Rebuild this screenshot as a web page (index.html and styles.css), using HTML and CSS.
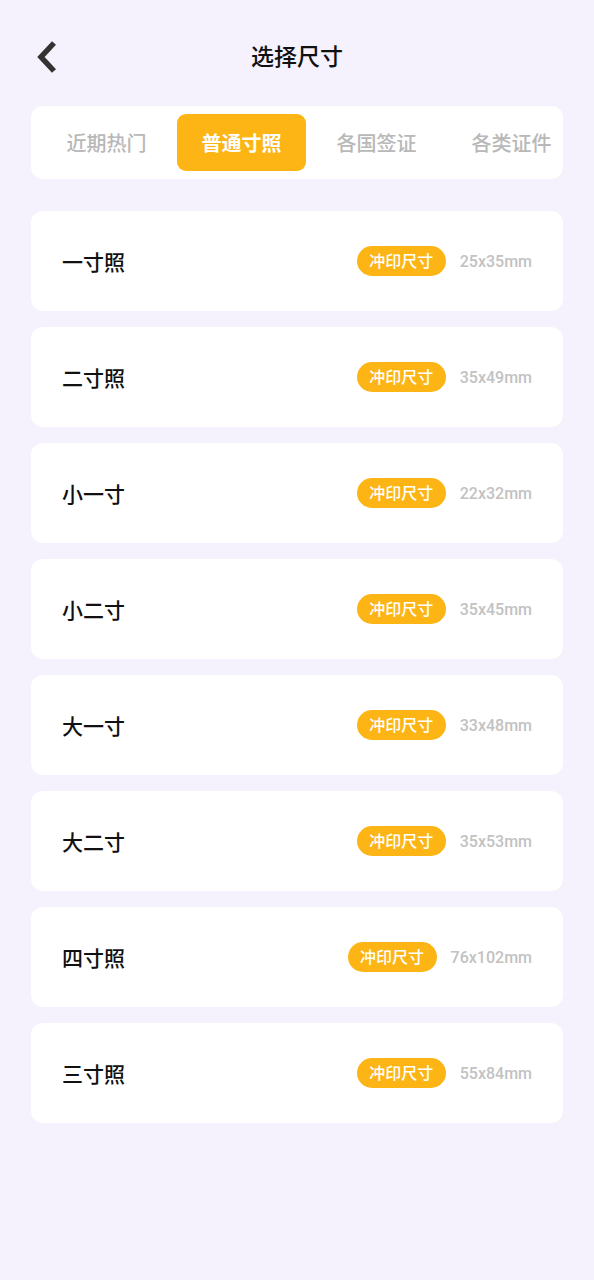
FILE: index.html
```html
<!DOCTYPE html>
<html lang="zh">
<head>
<meta charset="utf-8">
<title>选择尺寸</title>
<link rel="stylesheet" href="styles.css">
</head>
<body>
<div class="page">
  <header class="header">
    <svg class="back" width="24" height="34" viewBox="0 0 24 34"><path d="M18 3 L5 17 L18 31" fill="none" stroke="#333" stroke-width="5.5" stroke-linecap="butt" stroke-linejoin="miter"/></svg>
    <h1 class="title">选择尺寸</h1>
  </header>
  <nav class="tabs">
    <div class="tab">近期热门</div>
    <div class="tab active">普通寸照</div>
    <div class="tab">各国签证</div>
    <div class="tab">各类证件</div>
  </nav>
  <ul class="list">
    <li class="card"><span class="name">一寸照</span><span class="badge">冲印尺寸</span><span class="size">25x35mm</span></li>
    <li class="card"><span class="name">二寸照</span><span class="badge">冲印尺寸</span><span class="size">35x49mm</span></li>
    <li class="card"><span class="name">小一寸</span><span class="badge">冲印尺寸</span><span class="size">22x32mm</span></li>
    <li class="card"><span class="name">小二寸</span><span class="badge">冲印尺寸</span><span class="size">35x45mm</span></li>
    <li class="card"><span class="name">大一寸</span><span class="badge">冲印尺寸</span><span class="size">33x48mm</span></li>
    <li class="card"><span class="name">大二寸</span><span class="badge">冲印尺寸</span><span class="size">35x53mm</span></li>
    <li class="card"><span class="name">四寸照</span><span class="badge">冲印尺寸</span><span class="size">76x102mm</span></li>
    <li class="card"><span class="name">三寸照</span><span class="badge">冲印尺寸</span><span class="size">55x84mm</span></li>
  </ul>
</div>
</body>
</html>
```
FILE: styles.css
```css
* { box-sizing: border-box; }
html, body { margin: 0; padding: 0; }
body {
  background: #f5f2fd;
  font-family: Roboto, "Noto Sans CJK SC", sans-serif;
  width: 594px;
  min-height: 1280px;
}
.page { padding: 0 31px; }
.header {
  position: relative;
  height: 106px;
  padding-top: 36px;
  display: flex;
  justify-content: center;
}
.back {
  position: absolute;
  left: 5px;
  top: 40px;
}
.title {
  margin: 0;
  height: 44px;
  line-height: 44px;
  font-size: 23px;
  font-weight: 500;
  color: #111;
}
.tabs {
  background: #fff;
  border-radius: 12px;
  height: 73px;
  padding: 8px 11px;
  display: flex;
  gap: 6px;
  overflow: hidden;
}
.tab {
  flex: 0 0 129px;
  height: 57px;
  border-radius: 9px;
  display: flex;
  align-items: center;
  justify-content: center;
  font-size: 20px;
  font-weight: 500;
  color: #b8b8b8;
}
.tab.active {
  background: #fdb515;
  color: #fff;
  font-weight: 700;
}
.list {
  list-style: none;
  margin: 32px 0 0;
  padding: 0;
  display: flex;
  flex-direction: column;
  gap: 16px;
}
.card {
  background: #fff;
  border-radius: 12px;
  height: 100px;
  padding: 0 31px;
  display: flex;
  align-items: center;
}
.name {
  flex: 1;
  font-size: 21px;
  font-weight: 500;
  color: #111;
}
.badge {
  background: #fdb515;
  color: #fff;
  font-size: 16px;
  font-weight: 500;
  height: 30px;
  line-height: 31px;
  padding: 0 12.5px;
  border-radius: 15px;
}
.size {
  margin-left: 14px;
  font-size: 16px;
  font-weight: 500;
  color: #c2c2c2;
}
```
